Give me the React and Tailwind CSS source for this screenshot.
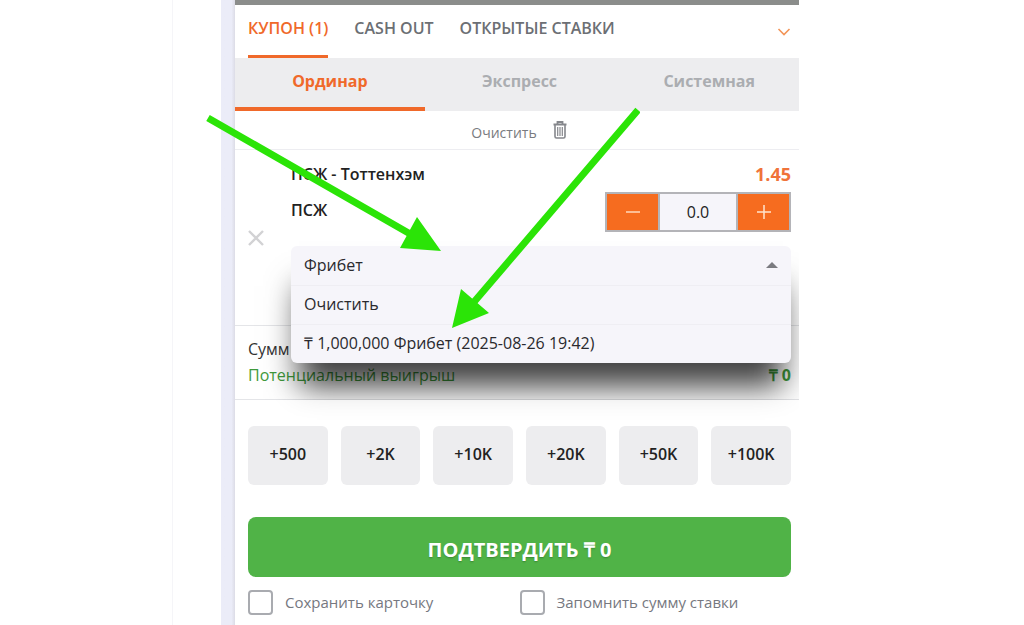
import React from 'react';

const couponTabs = ['КУПОН (1)', 'CASH OUT', 'ОТКРЫТЫЕ СТАВКИ'];
const betModes = ['Ординар', 'Экспресс', 'Системная'];
const quickAmounts = ['+500', '+2K', '+10K', '+20K', '+50K', '+100K'];
const freebets = ['Очистить', '₸ 1,000,000 Фрибет (2025-08-26 19:42)'];

const TrashIcon = () => (
  <svg width="14" height="18" viewBox="0 0 14 18" fill="none" stroke="#85878c" aria-hidden="true">
    <path d="M0.5 3.5h13M4.5 3V1h5v2" strokeWidth="1.8" />
    <path d="M2 4v11.5q0 1.5 1.5 1.5h7q1.500 0 1.500-1.500V4" strokeWidth="1.6" />
    <path d="M4.700 6v9M7 6v9M9.300 6v9" strokeWidth="1.200" />
  </svg>
);

// Row of top level tabs with the collapse arrow on the right
const CouponTabs = () => (
  <nav className="flex h-[53px] items-stretch gap-[26px] pr-2 pl-[13px]">
    {couponTabs.map((tab, i) => (
      <button
        key={tab}
        className={`border-b-[3px] pb-1 text-base font-semibold whitespace-nowrap ${
          i === 0 ? 'border-[#f0692a] text-[#f0692a]' : 'border-transparent text-[#6c6f74]'
        }`}
      >
        {tab}
      </button>
    ))}
    <button aria-label="Свернуть" className="ml-auto">
      <svg width="14" height="8" viewBox="0 0 14 8" fill="none" stroke="#f39558" strokeWidth="1.6">
        <path d="M1.500 1l5.500 5.500L12.500 1" />
      </svg>
    </button>
  </nav>
);

const BetModes = () => (
  <div className="-mr-[5px] grid h-[53px] grid-cols-3 bg-[#ededef]">
    {betModes.map((mode, i) => (
      <button
        key={mode}
        className={`border-b-4 pb-1 text-base font-bold ${
          i === 0 ? 'border-[#f0692a] text-[#f0692a]' : 'border-transparent text-[#abadb1]'
        }`}
      >
        {mode}
      </button>
    ))}
  </div>
);

const Stepper = () => (
  <div className="flex h-10 w-[186px] border-2 border-[#b4b4b8] bg-[#b4b4b8]">
    <button aria-label="Меньше" className="grid w-[51px] place-items-center bg-[#f66c1f]">
      <svg width="14" height="14" viewBox="0 0 14 14" stroke="#ffd9bd" strokeWidth="1.5">
        <path d="M0 7h14" />
      </svg>
    </button>
    <input
      aria-label="Сумма ставки"
      defaultValue="0.0"
      className="mx-0.5 w-0 flex-1 bg-[#f6f5fa] text-center text-base text-[#222]"
    />
    <button aria-label="Больше" className="grid w-[51px] place-items-center bg-[#f66c1f]">
      <svg width="14" height="14" viewBox="0 0 14 14" stroke="#ffe3cd" strokeWidth="1.5">
        <path d="M0 7h14M7 0v14" />
      </svg>
    </button>
  </div>
);

// Opened freebet list, it hangs over the summary below
const FreebetSelect = () => (
  <div className="absolute inset-x-0 top-0 z-10 rounded-md bg-[#f6f5fa] text-base text-[#2a2a2e] shadow-[0_32px_30px_-8px_rgba(0,0,0,0.75)]">
    <div className="relative">
      <select
        aria-label="Фрибет"
        className="block h-[39px] w-full appearance-none bg-transparent px-[13px] pb-0.5"
      >
        <option>Фрибет</option>
      </select>
      <svg width="12" height="6" viewBox="0 0 12 6" className="pointer-events-none absolute top-4 right-[13px]">
        <path d="M0 6l6-6 6 6z" fill="#7b7b80" />
      </svg>
    </div>
    <ul>
      {freebets.map((item) => (
        <li key={item} className="border-t border-[#efeef3]">
          <button className="block h-[38px] w-full px-[13px] pb-0.5 text-left">{item}</button>
        </li>
      ))}
    </ul>
  </div>
);

const BetItem = () => (
  <section className="flex h-[176px] border-b border-[#e4e5e8] pr-2 pl-[13px]">
    <button aria-label="Удалить" className="w-[43px]">
      <svg width="16" height="16" viewBox="0 0 16 16" stroke="#d2d2d4" strokeWidth="2.400">
        <path d="M1 1l14 14M15 1L1 15" />
      </svg>
    </button>
    <div className="flex-1 pt-3">
      <div className="flex h-[30px] justify-between leading-6">
        <h2 className="text-base font-semibold text-[#222]">ПСЖ - Тоттенхэм</h2>
        <span className="text-lg leading-6 font-bold text-[#f0733a]">1.45</span>
      </div>
      <div className="flex h-[54px] items-start justify-between">
        <span className="pt-1.5 text-base font-semibold text-[#222]">ПСЖ</span>
        <Stepper />
      </div>
      <div className="relative">
        <FreebetSelect />
      </div>
    </div>
  </section>
);

const Summary = () => (
  <section className="h-[74px] border-b border-[#e4e5e8] pt-2.5 pr-2 pl-[13px] text-base leading-[26px]">
    <p className="text-[#333]">Сумм</p>
    <p className="flex justify-between text-[#3f9a3c]">
      <span>Потенциальный выигрыш</span>
      <b>₸ 0</b>
    </p>
  </section>
);

const CheckOption = ({ label }) => (
  <label className="flex items-center gap-3 text-[15px] text-[#76787f]">
    <input
      type="checkbox"
      className="size-[25px] appearance-none rounded border-2 border-[#a9abb0] bg-white checked:bg-[#50b347]"
    />
    {label}
  </label>
);

// Green pointers: one to the freebet field, one to the bonus row
const Pointers = () => (
  <svg
    width="440"
    height="230"
    viewBox="200 105 440 230"
    className="pointer-events-none absolute top-[105px] left-[-35px] z-30"
    aria-hidden="true"
  >
    <g fill="#2be407" stroke="#2be407">
      <path d="M208 118L412 235M638 110L468 309" strokeWidth="7" />
      <path d="M441 251L417 217L400 248ZM452 328L461 289L489 313Z" stroke="none" />
    </g>
  </svg>
);

const App = () => (
  <div className="grid min-h-screen grid-cols-[173fr_48fr_14px_564fr_225fr] bg-white font-['Open_Sans',sans-serif]">
    <div className="border-r border-[#f5f5f8]" />
    <div />
    <div className="bg-linear-to-r from-[#ebecf8] from-75% to-[#dcdce6]" />
    <main className="relative">
      <div className="flex min-h-screen flex-col overflow-hidden">
        <div className="h-[5px] shrink-0 bg-[#8b8d8b]" />
        <CouponTabs />
        <BetModes />
        <button className="flex h-[39px] items-center justify-center gap-4 border-b border-[#ededf1] pl-1 text-sm text-[#797b80]">
          <span className="pt-1.5">Очистить</span>
          <TrashIcon />
        </button>
        <BetItem />
        <Summary />
        <section className="relative z-20 bg-white/70 pr-2 pb-2 pl-[13px]">
          <div className="grid grid-cols-6 gap-[13px] pt-[26px]">
            {quickAmounts.map((amount) => (
              <button
                key={amount}
                className="h-[59px] rounded-md bg-[#ededef] pb-1 text-base font-semibold text-[#222]"
              >
                {amount}
              </button>
            ))}
          </div>
          <button className="mt-8 h-[60px] w-full rounded-lg bg-[#50b347] pt-1.5 text-xl font-bold text-white text-shadow-sm">
            ПОДТВЕРДИТЬ ₸ 0
          </button>
          <div className="mt-[13px] grid grid-cols-2">
            <CheckOption label="Сохранить карточку" />
            <CheckOption label="Запомнить сумму ставки" />
          </div>
        </section>
      </div>
      <Pointers />
    </main>
  </div>
);

export default App;
